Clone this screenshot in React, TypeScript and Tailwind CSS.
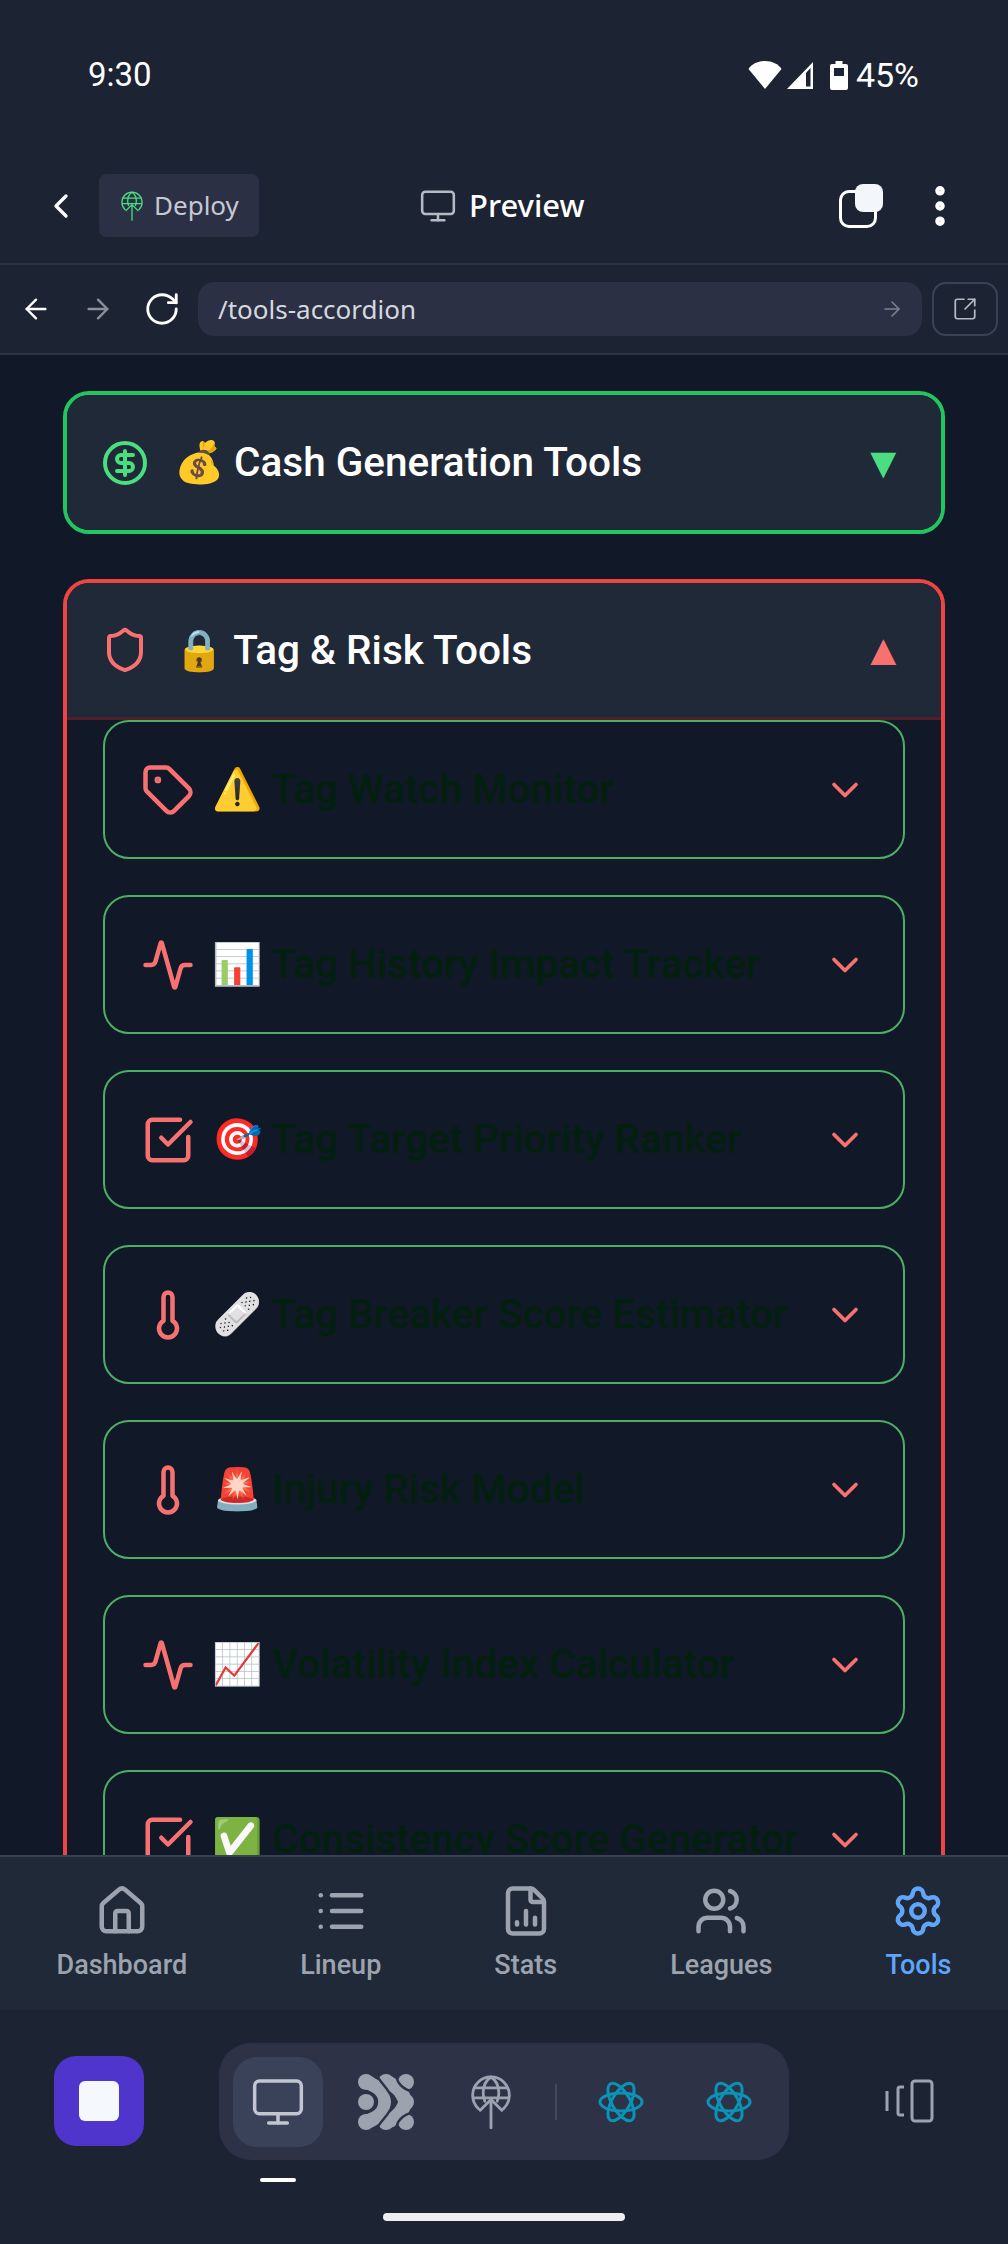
import {
  Activity, ArrowLeft, ArrowRight, ChevronDown, ChevronLeft, CircleDollarSign, EllipsisVertical, FileChartColumn,
  House, List, Monitor, RotateCw, Settings, Shield, SquareArrowOutUpRight, SquareCheckBig, Tag, Thermometer, Users,
} from 'lucide-react';
import type { ReactNode } from 'react';

const TOOLS = [
  { icon: <Tag className="h-[54px] w-[54px]" strokeWidth={2} />, emoji: '⚠️', name: 'Tag Watch Monitor' },
  { icon: <Activity className="h-[54px] w-[54px]" strokeWidth={2} />, emoji: '📊', name: 'Tag History Impact Tracker' },
  { icon: <SquareCheckBig className="h-[54px] w-[54px]" strokeWidth={2} />, emoji: '🎯', name: 'Tag Target Priority Ranker' },
  { icon: <Thermometer className="h-[54px] w-[54px]" strokeWidth={2} />, emoji: '🩹', name: 'Tag Breaker Score Estimator' },
  { icon: <Thermometer className="h-[54px] w-[54px]" strokeWidth={2} />, emoji: '🚨', name: 'Injury Risk Model' },
  { icon: <Activity className="h-[54px] w-[54px]" strokeWidth={2} />, emoji: '📈', name: 'Volatility Index Calculator' },
  { icon: <SquareCheckBig className="h-[54px] w-[54px]" strokeWidth={2} />, emoji: '✅', name: 'Consistency Score Generator' },
];

const NAV = [
  { label: 'Dashboard', icon: <House className="h-[54px] w-[54px]" strokeWidth={2} /> },
  { label: 'Lineup', icon: <List className="h-[54px] w-[54px]" strokeWidth={2} /> },
  { label: 'Stats', icon: <FileChartColumn className="h-[54px] w-[54px]" strokeWidth={2} /> },
  { label: 'Leagues', icon: <Users className="h-[54px] w-[54px]" strokeWidth={2} /> },
  { label: 'Tools', icon: <Settings className="h-[54px] w-[54px]" strokeWidth={2} />, active: true },
];

function StatusIcons() {
  return (
    <div className="flex items-center">
      <svg width="34" height="28" viewBox="0 0 34 28" fill="white">
        <path d="M17 28 0.500 8C3.500 3 10 0 17 0S30.500 3 33.500 8Z" />
      </svg>
      <svg className="ml-[4px]" width="28" height="28" viewBox="0 0 28 28" fill="white">
        <path d="M27 1V28H1ZM24.500 7 20 12V25.500H24.500Z" fillRule="evenodd" />
      </svg>
      <svg className="ml-[16px]" width="18" height="29" viewBox="0 0 18 29" fill="white">
        <path d="M5.500 0h7v3H16a2 2 0 0 1 2 2v22a2 2 0 0 1-2 2H2a2 2 0 0 1-2-2V5a2 2 0 0 1 2-2h3.500ZM4 7v8h10V7Z" fillRule="evenodd" />
      </svg>
    </div>
  );
}

function GlobeUp({ className, strokeWidth = 1.700 }: { className?: string; strokeWidth?: number }) {
  return (
    <svg className={className} viewBox="0 0 24 32" fill="none" stroke="currentColor" strokeWidth={strokeWidth} strokeLinecap="round">
      <path d="M4.500 20a11 11 0 1 1 15 0" />
      <path d="M12 1c-3 2-4.700 5.500-4.700 9.500 0 2 .4 3.700 1 5M12 1c3 2 4.700 5.500 4.700 9.500 0 2-.4 3.700-1 5" />
      <path d="M2 7.500h20M1.500 13.500h21" />
      <path d="M12 31.500V14.500M5.500 21 12 14.500 18.500 21" />
    </svg>
  );
}

function ReactLogo() {
  return (
    <svg width="46" height="46" viewBox="-23 -23 46 46" fill="none" stroke="#0b93b5" strokeWidth="3">
      <ellipse rx="21" ry="9" />
      <ellipse rx="21" ry="9" transform="rotate(60)" />
      <ellipse rx="21" ry="9" transform="rotate(120)" />
    </svg>
  );
}

function Blobs() {
  return (
    <svg width="56" height="56" viewBox="0 0 56 56" fill="#9ca3af">
      <circle cx="8" cy="8" r="8" />
      <circle cx="28" cy="8" r="8" />
      <circle cx="48" cy="8" r="8" />
      <circle cx="8" cy="28" r="8" />
      <circle cx="48" cy="28" r="8" />
      <circle cx="8" cy="48" r="8" />
      <circle cx="28" cy="48" r="8" />
      <circle cx="48" cy="48" r="8" />
      <g fill="none" stroke="#9ca3af" strokeWidth="14" strokeLinecap="round" strokeLinejoin="round">
        <path d="M8 8C16 10 20 14 24 20Q28 28 24 36C20 42 16 46 8 48" />
        <path d="M28 8C36 10 40 14 44 20L48 28L44 36C40 42 36 46 28 48" />
      </g>
      {/* toolbar-coloured gaps between the bands */}
      <g fill="none" stroke="#2d3246" strokeWidth="2.500">
        <path d="M18 -1C20 8 34 16 35 28C34 40 20 48 18 57" />
        <path d="M-1 17C10 16 19 20 19 28C19 36 10 40 -1 39" />
        <path d="M38 -1C38 8 44 16 57 18" />
        <path d="M38 57C38 48 44 40 57 38" />
      </g>
    </svg>
  );
}

function GroupHeader({ icon, title, arrow, arrowClass, bordered }: { icon: ReactNode; title: string; arrow: string; arrowClass: string; bordered?: boolean }) {
  return (
    <div className={`flex items-center gap-[25px] bg-[#1f2937] pl-[34px] pr-[36px] ${bordered ? 'h-[137px] border-b-[3px] border-[#4f1f2a]' : 'h-[135px]'}`}>
      {icon}
      <span className="whitespace-nowrap text-[40.500px] font-medium leading-none text-white">{title}</span>
      <span className={`ml-auto text-[44px] leading-none ${arrowClass}`}>{arrow}</span>
    </div>
  );
}

function ToolRow({ icon, emoji, name }: { icon: ReactNode; emoji: string; name: string }) {
  return (
    <div className="flex h-[139px] shrink-0 items-center gap-[17px] rounded-[26px] border-2 border-[#4caf64] pl-[36px] pr-[36px]">
      <div className="shrink-0 text-[#f87171]">{icon}</div>
      <span className="min-w-0 flex-1 whitespace-nowrap text-[40.500px] font-medium leading-none text-[#03200f]">
        {emoji} {name}
      </span>
      <ChevronDown className="h-[44px] w-[44px] shrink-0 text-[#f87171]" strokeWidth={2} />
    </div>
  );
}

export default function App() {
  return (
    <div className="flex h-[2244px] w-[1008px] flex-col overflow-hidden bg-[#1c2333] font-['Roboto',sans-serif]">
      {/* Android status bar */}
      <div className="flex h-[148px] shrink-0 items-start justify-between pl-[88px] pr-[89px] pt-[57px] text-white">
        <span className="text-[33px] leading-[36px]">9:30</span>
        <div className="flex items-center gap-[8px]">
          <StatusIcons />
          <span className="text-[34px] leading-[36px]">45%</span>
        </div>
      </div>

      {/* Preview header */}
      <div className="relative flex h-[117px] shrink-0 items-center border-b-2 border-[#2c3345] pl-[50px] pr-[56px] font-['Noto_Sans',sans-serif]">
        <ChevronLeft className="-ml-[9px] h-[40px] w-[40px] text-white" strokeWidth={2} />
        <div className="ml-[18px] flex h-[63px] w-[160px] items-center gap-[11px] rounded-[7px] bg-[#2b3044] pl-[22px] text-[26px] text-[#c5c9d3]">
          <GlobeUp className="h-[32px] w-[22px] text-[#4ade80]" strokeWidth={1.400} />
          Deploy
        </div>
        <div className="ml-[160px] flex items-center gap-[12px] text-white">
          <Monitor className="h-[38px] w-[38px] text-[#b6bac3]" strokeWidth={1.600} />
          <span className="text-[31px] font-medium">Preview</span>
        </div>
        <div className="relative ml-auto mr-[31px] h-[44px] w-[44px]">
          <div className="absolute bottom-0 left-0 h-[38px] w-[38px] rounded-[10px] border-[3px] border-white" />
          <div className="absolute right-0 top-0 h-[28px] w-[28px] rounded-[8px] bg-[#f3f6fb]" />
        </div>
        <EllipsisVertical className="-mr-[14px] h-[52px] w-[52px] text-white" strokeWidth={2.400} />
      </div>

      {/* Url bar */}
      <div className="flex h-[90px] shrink-0 items-center border-b-2 border-[#2c3345] pl-[20px] pr-[10px] font-['Noto_Sans',sans-serif]">
        <ArrowLeft className="h-[32px] w-[32px] text-white" strokeWidth={1.800} />
        <ArrowRight className="ml-[30px] h-[32px] w-[32px] text-[#8b8f99]" strokeWidth={1.800} />
        <RotateCw className="ml-[29px] h-[38px] w-[38px] text-white" strokeWidth={1.800} />
        <div className="ml-[17px] flex h-[54px] flex-1 items-center justify-between rounded-[16px] bg-[#2b3044] pl-[20px] pr-[18px]">
          <span className="text-[26px] text-[#d5d8df]">/tools-accordion</span>
          <ArrowRight className="h-[24px] w-[24px] text-[#7d818c]" strokeWidth={1.600} />
        </div>
        <div className="ml-[10px] flex h-[54px] w-[66px] items-center justify-center rounded-[14px] border-2 border-[#3a4256]">
          <SquareArrowOutUpRight className="h-[26px] w-[26px] text-[#b6bac3]" strokeWidth={1.600} />
        </div>
      </div>

      {/* Scrolling page */}
      <div className="flex min-h-0 flex-1 flex-col gap-[45px] overflow-hidden bg-[#111827] pl-[63px] pr-[63px] pt-[36px]">
        <div className="shrink-0 overflow-hidden rounded-[26px] border-4 border-[#22c55e]">
          <GroupHeader
            icon={<CircleDollarSign className="h-[48px] w-[48px] shrink-0 text-[#4ade80]" strokeWidth={2} />}
            title="💰 Cash Generation Tools"
            arrow="▼"
            arrowClass="text-[#4ade80]"
          />
        </div>
        <div className="shrink-0 rounded-[26px] border-4 border-[#ef4444]">
          <div className="overflow-hidden rounded-t-[22px]">
            <GroupHeader
              icon={<Shield className="h-[48px] w-[48px] shrink-0 text-[#f87171]" strokeWidth={2} />}
              title="🔒 Tag & Risk Tools"
              arrow="▲"
              arrowClass="text-[#f87171]"
              bordered
            />
          </div>
          <div className="flex flex-col gap-[36px] pl-[36px] pr-[36px]">
            {TOOLS.map((tool) => (
              <ToolRow key={tool.name} icon={tool.icon} emoji={tool.emoji} name={tool.name} />
            ))}
          </div>
        </div>
      </div>

      {/* Bottom nav of the previewed app */}
      <div className="flex h-[155px] shrink-0 items-start justify-around border-t-2 border-[#374151] bg-[#1f2937] pt-[27px]">
        {NAV.map((item) => (
          <div key={item.label} className={`flex flex-col items-center gap-[11px] ${item.active ? 'text-[#60a5fa]' : 'text-[#9ca3af]'}`}>
            {item.icon}
            <span className="text-[27px] font-medium leading-[32px]">{item.label}</span>
          </div>
        ))}
      </div>

      {/* Replit toolbar */}
      <div className="relative flex h-[234px] shrink-0 items-start pl-[54px] pt-[33px]">
        <div className="mt-[13px] flex h-[90px] w-[90px] items-center justify-center rounded-[22px] bg-[#5035cc]">
          <div className="h-[40px] w-[40px] rounded-[6px] bg-[#f5f8fc]" />
        </div>
        <div className="relative ml-[75px] flex h-[117px] w-[570px] items-center rounded-[32px] bg-[#2d3246] pl-[14px]">
          <div className="flex h-[90px] w-[90px] items-center justify-center rounded-[24px] bg-[#3a4259]">
            <Monitor className="h-[56px] w-[56px] text-[#c2c6ce]" strokeWidth={1.500} />
          </div>
          <div className="ml-[35px] flex h-[56px] w-[56px] items-center justify-center"><Blobs /></div>
          <GlobeUp className="ml-[57px] h-[54px] w-[40px] text-[#9ca3af]" />
          <div className="ml-[44px] h-[36px] w-[2px] bg-[#434a5e]" />
          <div className="ml-[41px]"><ReactLogo /></div>
          <div className="ml-[62px]"><ReactLogo /></div>
          <div className="absolute left-[41px] top-[135px] h-[4px] w-[36px] rounded-full bg-white" />
        </div>
        <svg className="ml-[95px] mt-[36px]" width="50" height="44" viewBox="0 0 50 44" fill="none" stroke="#9ca3af" strokeWidth="3">
          <rect x="28" y="2" width="20" height="40" rx="3" />
          <path d="M20 8h-4a2 2 0 0 0-2 2v24a2 2 0 0 0 2 2h4M3 12v20" />
        </svg>
        <div className="absolute bottom-[23px] left-[383px] h-[8px] w-[242px] rounded-full bg-[#eceef0]" />
      </div>
    </div>
  );
}
